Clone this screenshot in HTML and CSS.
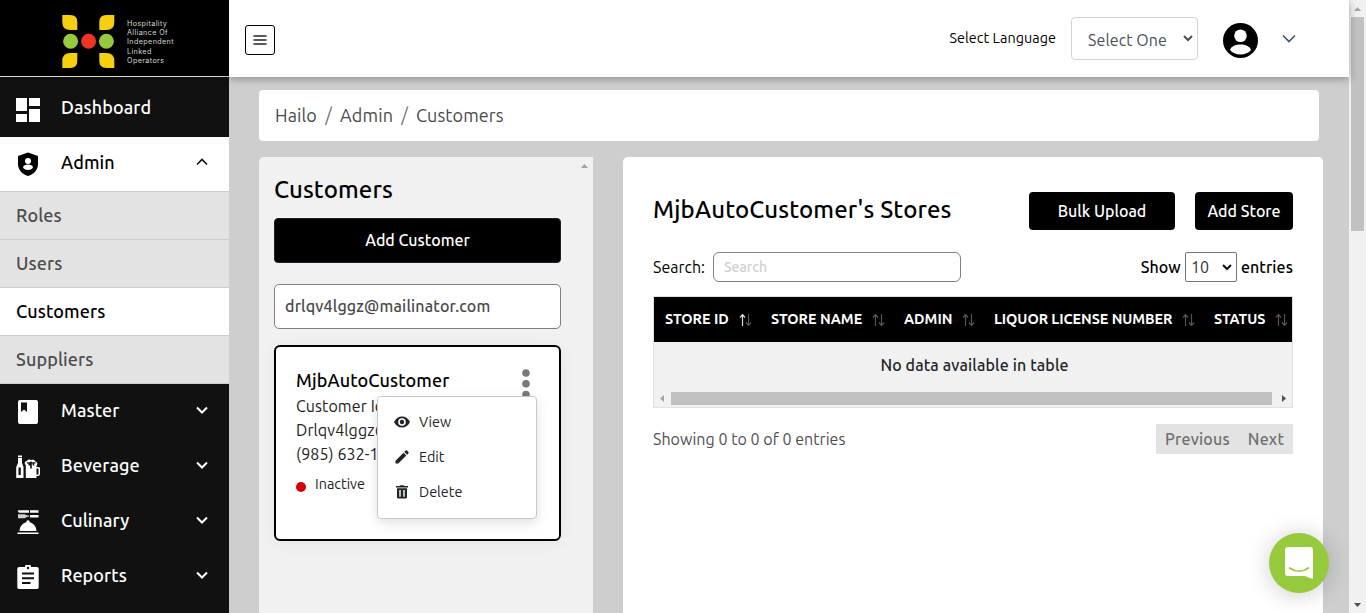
FILE: index.html
```html
<!DOCTYPE html>
<html lang="en">
<head>
<meta charset="utf-8">
<title>Customers</title>
<link rel="stylesheet" href="styles.css">
</head>
<body>
<div class="app">
  <aside class="sidebar">
    <div class="brand">
      <svg class="brand-mark" width="54" height="54" viewBox="0 0 54 54">
        <g fill="#f6cf0f">
          <path d="M.300 1h8q7 0 7 7v8H8.300q-8 0-8-8z"/>
          <path d="M52.300 1h-8q-7 0-7 7v8h7q8 0 8-8z"/>
          <path d="M.300 54h8q7 0 7-7v-8H8.300q-8 0-8 8z"/>
          <path d="M52.300 54h-8q-7 0-7-7v-8h7q8 0 8 8z"/>
        </g>
        <circle cx="8.600" cy="27.200" r="7.500" fill="#97c93d"/>
        <circle cx="26.600" cy="27.200" r="7.500" fill="#ee3524"/>
        <circle cx="44.400" cy="27.200" r="7.500" fill="#97c93d"/>
      </svg>
      <div class="brand-text">Hospitality<br>Alliance Of<br>Independent<br>Linked<br>Operators</div>
    </div>
    <nav>
      <a class="nav-item dash">
        <svg width="24" height="24" viewBox="0 0 24 24" fill="#fff"><path d="M0 0h11v13H0zM13 0h11v8H13zM0 16h11v8H0zM13 11h11v13H13z"/></svg>
        <span>Dashboard</span>
      </a>
      <a class="nav-item admin">
        <svg width="24" height="24" viewBox="0 0 24 24"><path d="M12 0.500 2 4v8c0 6 4.500 10.500 10 12 5.500-1.500 10-6 10-12V4z"/><circle cx="12" cy="9" r="3" fill="#fff"/><path d="M7 15.500c0-2 2.500-3 5-3s5 1 5 3c-1 1.700-3 2.500-5 2.500s-4-.8-5-2.500z" fill="#fff"/></svg>
        <span>Admin</span>
        <svg class="caret" width="12" height="8" viewBox="0 0 12 8"><path d="m1 6.500 5-5 5 5"/></svg>
      </a>
      <a class="sub">Roles</a>
      <a class="sub">Users</a>
      <a class="sub current">Customers</a>
      <a class="sub">Suppliers</a>
      <a class="nav-item">
        <svg width="24" height="24" viewBox="0 0 24 24"><rect x="2" width="20" height="24" rx="2" fill="#fff"/><path d="M5 2.500h6v9.500l-3-2.500L5 12z" fill="#111"/></svg>
        <span>Master</span>
        <svg class="caret" width="12" height="8" viewBox="0 0 12 8"><path d="m1 1.500 5 5 5-5"/></svg>
      </a>
      <a class="nav-item">
        <svg width="24" height="24" viewBox="0 0 24 24" fill="#fff"><path d="M2 .500h4V2H2zM2 2.800h4V8l1.500 4v11H.200V12L2 8z"/><path d="M2.500 12.500h2.300v7.500H2.500z" fill="#111"/><path d="M9.800 10C8 9 8.800 5.800 11 6c.5-1.500 3-2 4-.8 1.500-1 4-.3 4.200 1.300 2 .2 2.800 2.500 1.300 4V12H23l1 1v6.500L22.800 21h-2.300v2H9.800z"/><path d="M11 7.200h3l1-1 1 1h3.500v1.300h-1.300v2h-1.500v-2h-.9v5h-1.600v-3h-1.600V8.500H11zM20.500 13.500h2v6h-2z" fill="#111"/></svg>
        <span>Beverage</span>
        <svg class="caret" width="12" height="8" viewBox="0 0 12 8"><path d="m1 1.500 5 5 5-5"/></svg>
      </a>
      <a class="nav-item">
        <svg width="24" height="24" viewBox="0 0 24 24" fill="#fff"><path d="M1.500.7 3 .2h10v2.600H3zM14 .2h8.500v2.600H14z"/><path d="M2 4.300h6.500l3 1.200H13v1.300h-1.500l-3 1.500H2z" opacity=".8"/><path d="M14 5h8.500v2.600H14zM3.500 21c.3-5 3.500-8 7-8.700a1.600 1.600 0 1 1 3 0c3.500.7 6.700 3.700 7 8.700zM1.500 22.500h21V24h-21z"/></svg>
        <span>Culinary</span>
        <svg class="caret" width="12" height="8" viewBox="0 0 12 8"><path d="m1 1.500 5 5 5-5"/></svg>
      </a>
      <a class="nav-item">
        <svg width="24" height="24" viewBox="0 0 24 24"><path d="M3 2h6a3 3 0 0 1 6 0h6q1.700 0 1.700 1.700v18.600Q22.700 24 21 24H3q-1.700 0-1.700-1.700V3.700Q1.300 2 3 2z" fill="#fff"/><circle cx="12" cy="3" r="1.200" fill="#111"/><path d="M6 7.500h12v2H6zM6 12.200h12v2H6zM6 17h8.500v2H6z" fill="#111"/></svg>
        <span>Reports</span>
        <svg class="caret" width="12" height="8" viewBox="0 0 12 8"><path d="m1 1.500 5 5 5-5"/></svg>
      </a>
    </nav>
  </aside>

  <div class="page">
    <header class="topbar">
      <button class="burger"><svg width="14" height="10" viewBox="0 0 14 10"><path d="M.5 1h13M.5 5h13M.5 9h13" stroke="#222" stroke-width="1.500"/></svg></button>
      <span class="lang">Select Language</span>
      <div class="lang-select"><span>Select One</span><svg width="10" height="7" viewBox="0 0 10 7"><path d="m1 1 4 4 4-4" fill="none" stroke="#495057" stroke-width="2"/></svg></div>
      <svg class="avatar" width="35" height="35" viewBox="0 0 35 35"><circle cx="17.500" cy="17.500" r="17.500"/><circle cx="17.500" cy="12.800" r="6.300" fill="#fff"/><path d="M7 27c.8-3.700 6-5.500 10.500-5.500S27.200 23.300 28 27c-2.300 2.800-6 4.500-10.500 4.500S9.300 29.800 7 27z" fill="#fff"/></svg>
      <svg width="14" height="9" viewBox="0 0 14 9"><path d="m1 1.500 6 6 6-6" fill="none" stroke="#3b5070" stroke-width="1.600"/></svg>
    </header>

    <main>
      <div class="crumbs"><span>Hailo</span><i>/</i><span>Admin</span><i>/</i><span>Customers</span></div>
      <div class="columns">
        <section class="customers">
          <svg class="panel-up" width="7" height="4" viewBox="0 0 7 4"><path d="M0 4 3.500 0 7 4z" fill="#a3a3a3"/></svg>
          <h2>Customers</h2>
          <button class="add-customer">Add Customer</button>
          <div class="filter">drlqv4lggz@mailinator.com</div>
          <article class="card">
            <h3>MjbAutoCustomer</h3>
            <p>Customer Id</p>
            <p>Drlqv4lggz@</p>
            <p>(985) 632-1</p>
            <div class="state"><i></i>Inactive</div>
            <svg class="dots" width="8" height="30" viewBox="0 0 8 30" fill="#7a7a7a"><circle cx="4" cy="4" r="3.800"/><circle cx="4" cy="14.800" r="3.800"/><circle cx="4" cy="25.500" r="3.800"/></svg>
            <div class="menu">
              <a><svg width="16" height="16" viewBox="0 0 16 16"><path d="M0 8c1.500-3.500 4.500-5.500 8-5.500s6.500 2 8 5.500c-1.500 3.500-4.500 5.500-8 5.500S1.500 11.500 0 8z" fill="#212529"/><circle cx="8" cy="8" r="3" fill="#212529" stroke="#fff" stroke-width="1.600"/></svg>View</a>
              <a><svg width="16" height="16" viewBox="0 0 16 16" fill="#212529"><path d="m1.500 11.700 8-8 2.800 2.800-8 8H1.500zM10.300 2.900l1.300-1.300q.8-.6 1.500 0l1.300 1.300q.6.8 0 1.500l-1.300 1.300z"/></svg>Edit</a>
              <a><svg width="16" height="16" viewBox="0 0 16 16" fill="#212529"><path d="M2 2h3.500l.8-.8h3.400l.8.800H14v1.500H2zM3 4.300h10V13q0 1.500-1.500 1.500h-7Q3 14.500 3 13z"/><path d="M5.300 6h1.400v6.800H5.300zM9.300 6h1.400v6.800H9.300z" fill="#fff"/></svg>Delete</a>
            </div>
          </article>
        </section>

        <section class="stores">
          <div class="stores-head">
            <h2>MjbAutoCustomer's Stores</h2>
            <button class="bulk">Bulk Upload</button>
            <button class="add-store">Add Store</button>
          </div>
          <div class="tools">
            <span class="search-label">Search:</span>
            <div class="search">Search</div>
            <b>Show</b>
            <div class="count">10<svg width="10" height="7" viewBox="0 0 10 7"><path d="m1 1 4 4 4-4" fill="none" stroke="#111" stroke-width="2"/></svg></div>
            <b>entries</b>
          </div>
          <div class="table">
            <div class="thead">
              <div class="th c1 asc">STORE ID<svg class="sort" width="13" height="12" viewBox="0 0 13 12"><path d="M3.500 12V1M1 3.500l2.500-3 2.500 3"/><path d="M9.500 0v11M7 8.500l2.500 3 2.500-3"/></svg></div>
              <div class="th c2">STORE NAME<svg class="sort" width="13" height="12" viewBox="0 0 13 12"><path d="M3.500 12V1M1 3.500l2.500-3 2.500 3"/><path d="M9.500 0v11M7 8.500l2.500 3 2.500-3"/></svg></div>
              <div class="th c3">ADMIN<svg class="sort" width="13" height="12" viewBox="0 0 13 12"><path d="M3.500 12V1M1 3.500l2.500-3 2.500 3"/><path d="M9.500 0v11M7 8.500l2.500 3 2.500-3"/></svg></div>
              <div class="th c4">LIQUOR LICENSE NUMBER<svg class="sort" width="13" height="12" viewBox="0 0 13 12"><path d="M3.500 12V1M1 3.500l2.500-3 2.500 3"/><path d="M9.500 0v11M7 8.500l2.500 3 2.500-3"/></svg></div>
              <div class="th c5">STATUS<svg class="sort" width="13" height="12" viewBox="0 0 13 12"><path d="M3.500 12V1M1 3.500l2.500-3 2.500 3"/><path d="M9.500 0v11M7 8.500l2.500 3 2.500-3"/></svg></div>
            </div>
            <div class="empty">No data available in table</div>
            <div class="hscroll">
              <svg width="4" height="7" viewBox="0 0 4 7"><path d="M4 0v7L0 3.500z" fill="#a3a3a3"/></svg>
              <div class="hthumb"></div>
              <svg width="4" height="7" viewBox="0 0 4 7"><path d="M0 0v7l4-3.500z" fill="#505050"/></svg>
            </div>
          </div>
          <div class="foot">
            <span class="info">Showing 0 to 0 of 0 entries</span>
            <div class="pager"><span>Previous</span><span class="next">Next</span></div>
          </div>
        </section>
      </div>
    </main>
  </div>

  <div class="vscroll">
    <svg width="7" height="4" viewBox="0 0 7 4"><path d="M0 4 3.500 0 7 4z" fill="#a3a3a3"/></svg>
    <div class="vthumb"></div>
    <svg width="7" height="4" viewBox="0 0 7 4"><path d="M0 0h7L3.500 4z" fill="#505050"/></svg>
  </div>
</div>
<div class="chat"><svg width="28" height="32" viewBox="0 0 28 32"><path d="M3 0h22q3 0 3 3v29q-4-1-8-3H3q-3 0-3-3V3q0-3 3-3z" fill="#fff"/><path d="M4.500 21q9.500 6.500 19 0" fill="none" stroke="#97c93d" stroke-width="1.700" stroke-linecap="round"/></svg></div>
</body>
</html>
```
FILE: styles.css
```css
* { box-sizing: border-box; }
body { margin: 0; font-family: Ubuntu, "Noto Sans", sans-serif; font-size: 16px; color: #000; overflow: hidden; }
h2, h3, p { margin: 0; font-weight: 500; }
svg { flex: none; display: block; }
button { font-family: inherit; cursor: pointer; padding: 0; }

.app { display: flex; height: 613px; overflow: hidden; background: #cecece; }

.sidebar { width: 229px; flex: none; background: #111; overflow: hidden; }
.brand { height: 77px; background: #000; border-bottom: 1px solid #d8d8d8; display: flex; padding: 14px 0 0 62px; }
.brand-text { color: #d5d5d5; font-family: Inter, sans-serif; font-size: 7.200px; line-height: 9.200px; letter-spacing: .38px; margin: 5px 0 0 11px; white-space: nowrap; }
.nav-item { display: flex; align-items: center; height: 55px; padding: 0 21px 1px 16px; color: #fff; font-size: 18px; font-weight: 500; letter-spacing: .1px; }
.nav-item span { margin-left: 21px; flex: 1; padding-bottom: 2px; }
.nav-item > svg:first-child { position: relative; top: 1px; }
.nav-item.dash { height: 60px; padding-bottom: 0; }
.nav-item.dash > svg:first-child { top: 3px; }
.nav-item.dash span { padding-bottom: 0; }
.nav-item.admin { background: #fff; color: #000; border-bottom: 1px solid #ccc; }
.nav-item.admin span { padding-bottom: 3px; }
.nav-item.admin > svg:first-child { top: 0; }
.caret { fill: none; stroke: #fff; stroke-width: 2; margin-bottom: 2px; }
.admin .caret { stroke: #111; stroke-width: 1.600; margin-bottom: 3px; }
.sub { display: flex; align-items: center; height: 48px; padding: 0 16px 1px; background: #e3e3e3; border-bottom: 1px solid #ccc; color: #4c4c4c; font-size: 18px; font-weight: 500; letter-spacing: .12px; }
.sub.current { background: #fff; color: #000; }

.page { width: 1120px; flex: none; }
.topbar { position: relative; display: flex; align-items: center; height: 77px; background: #fff; box-shadow: 0 2px 8px rgba(0, 0, 0, .32); padding: 0 53px 0 16px; }
.burger { width: 30px; height: 30px; display: flex; align-items: center; justify-content: center; background: #fff; border: 1px solid #000; border-radius: 3px; margin-top: 2px; }
.lang { margin-left: auto; padding-bottom: 1px; font-size: 14.400px; letter-spacing: .04px; }
.lang-select { width: 127px; height: 43px; margin-left: 15px; border: 1px solid #ced4da; border-radius: 4px; display: flex; align-items: center; justify-content: space-between; padding: 2px 4px 0 16px; color: #495057; letter-spacing: .1px; }
.lang-select svg { margin-bottom: 2px; }
.avatar { margin: 3px 24px 0 25px; }

main { padding: 13px 26px 0 30px; }
.crumbs { width: 1060px; height: 51px; border-radius: 4px; background: #fff; color: #4a4a4a; display: flex; align-items: center; padding: 0 0 1px 16px; font-size: 18px; letter-spacing: .12px; }
.crumbs i { font-style: normal; color: #6c757d; width: 23px; text-align: center; }
.columns { display: flex; gap: 30px; margin-top: 16px; }

.customers { position: relative; width: 334px; height: 456px; background: #f1f1f1; border-radius: 5px 0 0 0; padding: 18px 32px 0 15px; }
.panel-up { position: absolute; right: 5px; top: 7px; }
.customers h2 { font-size: 24px; line-height: 30px; letter-spacing: .15px; }
.add-customer { width: 287px; height: 45px; margin-top: 13px; border: 1px solid #1d1f2b; border-radius: 4px; background: #000; color: #fff; font-size: 16px; font-weight: 500; padding-bottom: 1px; }
.filter { width: 287px; height: 45px; margin-top: 21px; padding: 0 10px; border: 1px solid #808080; border-radius: 5px; background: #fff; color: #4a4a4a; font-weight: 500; line-height: 43px; letter-spacing: .17px; }
.card { position: relative; width: 287px; height: 196px; margin-top: 16px; padding: 21px 20px; border: 2px solid #000; border-radius: 6px; background: #fff; box-shadow: 0 2px 18px rgba(0, 0, 0, .05); color: #222; }
.card h3 { font-size: 18px; line-height: 24px; color: #000; letter-spacing: .12px; margin-bottom: 1px; }
.card p { font-weight: 400; line-height: 24px; position: relative; top: 1px; letter-spacing: .1px; }
.state { display: flex; align-items: center; height: 24px; margin-top: 7px; font-size: 14.400px; }
.state i { width: 10px; height: 10px; border-radius: 50%; background: #d40000; margin: 6px 9px 0 0; }
.dots { position: absolute; right: 29px; top: 22px; }
.menu { position: absolute; left: 101px; top: 49px; width: 160px; height: 123px; padding: 7px 16px; border: 1px solid #c5c9cc; border-radius: 4px; background: #fff; box-shadow: 0 4px 12px rgba(0, 0, 0, .12); color: #212529; font-size: 14.400px; }
.menu a { display: flex; align-items: center; gap: 9px; height: 35px; }

.stores { width: 700px; height: 456px; flex: none; background: #fff; border-radius: 5px 5px 0 0; padding: 35px 30px 0 30px; }
.stores-head { display: flex; height: 38px; }
.stores-head h2 { flex: 1; font-size: 24px; line-height: 35px; letter-spacing: .15px; }
.stores-head button { height: 38px; border: 0; border-radius: 4px; background: #000; color: #fff; font-size: 16px; font-weight: 500; }
.bulk { width: 146px; }
.add-store { width: 98px; margin-left: 20px; }
.tools { display: flex; align-items: center; height: 30px; margin-top: 22px; }
.search-label { width: 60px; }
.search { width: 248px; height: 30px; margin-right: auto; padding: 0 10px; border: 1px solid #808080; border-radius: 6px; color: #cfcfcf; font-size: 14px; font-weight: 500; line-height: 29px; }
.tools b { font-weight: 500; letter-spacing: .1px; }
.count { width: 52px; height: 30px; margin: 0 4px; padding: 0 4px 0 5px; border: 1px solid #767676; border-radius: 2px; display: flex; align-items: center; justify-content: space-between; color: #333; }

.table { margin-top: 14px; width: 640px; height: 112px; border: 1px solid #dee2e6; background: #f1f1f1; }
.thead { display: flex; height: 45px; background: #000; color: #fff; overflow: hidden; }
.th { flex: none; display: flex; align-items: center; justify-content: space-between; padding-bottom: 1px; font-size: 14.400px; font-weight: 700; white-space: nowrap; }
.c1 { width: 87px; margin-left: 11px; }
.c2 { width: 114px; margin-left: 19px; }
.c3 { width: 71px; margin-left: 19px; }
.c4 { width: 201px; margin-left: 19px; letter-spacing: -.07px; }
.c5 { width: 74px; margin-left: 19px; }
.sort { fill: none; stroke: #555; stroke-width: 1.200; margin: 2px 0 0; }
.asc .sort path:first-child { stroke: #ddd; }
.empty { height: 48px; padding-left: 3px; line-height: 46px; text-align: center; font-weight: 500; letter-spacing: .13px; color: #212529; }
.hscroll { height: 17px; display: flex; align-items: center; padding: 0 6px; }
.hthumb { width: 601px; height: 13px; margin: 0 auto 0 7px; background: #c1c1c1; }
.foot { display: flex; justify-content: space-between; margin-top: 16px; height: 30px; color: #4f4f4f; }
.info { line-height: 30px; letter-spacing: .03px; }
.pager { width: 137px; background: #e3e3e3; color: #707070; font-weight: 500; line-height: 30px; padding-left: 9px; display: flex; letter-spacing: .2px; }
.next { margin-left: 18px; }

.vscroll { width: 17px; flex: none; background: #f1f1f1; display: flex; flex-direction: column; align-items: center; padding: 7px 0 6px; }
.vthumb { width: 13px; height: 214px; margin: 6px 0 auto; background: #c1c1c1; }
.chat { position: absolute; left: 1269px; top: 533px; width: 60px; height: 60px; border-radius: 50%; background: #97c93d; display: flex; align-items: center; justify-content: center; box-shadow: 0 2px 24px rgba(0, 0, 0, .2); }
```
